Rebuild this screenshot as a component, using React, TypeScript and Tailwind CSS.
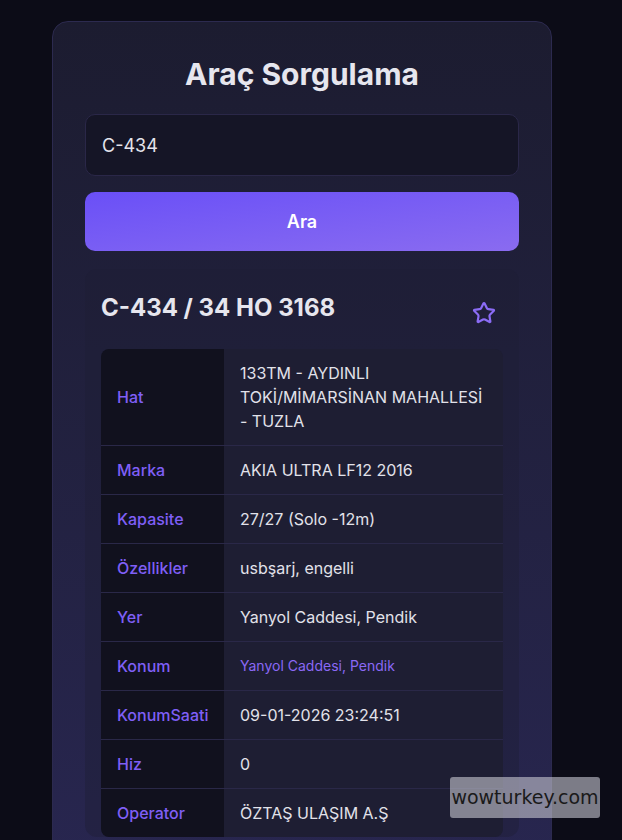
import { Star } from "lucide-react";

type Row = { label: string; value: string; link?: boolean };

const rows: Row[] = [
  { label: "Hat", value: "133TM - AYDINLI TOKİ/MİMARSİNAN MAHALLESİ - TUZLA" },
  { label: "Marka", value: "AKIA ULTRA LF12 2016" },
  { label: "Kapasite", value: "27/27 (Solo -12m)" },
  { label: "Özellikler", value: "usbşarj, engelli" },
  { label: "Yer", value: "Yanyol Caddesi, Pendik" },
  { label: "Konum", value: "Yanyol Caddesi, Pendik", link: true },
  { label: "KonumSaati", value: "09-01-2026 23:24:51" },
  { label: "Hiz", value: "0" },
  { label: "Operator", value: "ÖZTAŞ ULAŞIM A.Ş" },
];

export default function App() {
  return (
    <div className="relative min-h-[840px] h-[840px] overflow-hidden bg-[#0c0c17] font-['Inter',sans-serif] pl-[52px] pt-[21px]">
      <div className="w-[500px] rounded-2xl border border-[#2c2a4f] bg-gradient-to-b from-[#1c1c30] to-[#282650] px-8 pt-8 pb-10">
        <h1 className="text-center text-[30px] leading-[40px] font-bold text-[#e6e6ee]">Araç Sorgulama</h1>
        <div className="mt-[20px] h-[62px] rounded-[10px] border border-[#2a2748] bg-[#151526] flex items-center px-4 text-[18px] text-[#e4e4ec]">
          C-434
        </div>
        <button className="mt-4 w-full h-[59px] rounded-[10px] bg-gradient-to-br from-[#6a4ff7] to-[#8a6bf0] text-white text-[18px] font-semibold">
          Ara
        </button>
        <div className="mt-[18px] rounded-xl bg-[#1e1e34]/40 px-4 pt-[21px]">
          <div className="flex items-center justify-between pr-[7px]">
            <h2 className="text-[24px] leading-[36px] font-bold text-[#e6e6ee]">C-434 / 34 HO 3168</h2>
            <Star size={24} strokeWidth={2.2} className="text-[#8b6cf5] mt-[10px]" />
          </div>
          <div className="mt-[23px] rounded-lg overflow-hidden">
            {rows.map((r, i) => (
              <div
                key={r.label}
                className={`flex ${i < rows.length - 1 ? "border-b border-[#2a2848]" : ""}`}
              >
                <div className="w-[123px] shrink-0 bg-[#11111e] px-4 py-3 flex items-center text-[16px] leading-6 font-medium text-[#7f5ff6]">
                  {r.label}
                </div>
                <div
                  className={`flex-1 bg-[#1e1e33] px-4 py-3 flex items-center ${
                    r.link ? "text-[14px] leading-6 text-[#8a68f5]" : "text-[16px] leading-6 text-[#e2e2ea]"
                  }`}
                >
                  {r.value}
                </div>
              </div>
            ))}
          </div>
        </div>
      </div>
      <div className="absolute left-[450px] top-[777px] w-[150px] h-[41px] rounded-[3px] bg-[#c8c8d2]/60 flex items-center justify-center text-[19px] text-[#1a1a1a] font-['DejaVu_Sans',sans-serif]">
        wowturkey.com
      </div>
    </div>
  );
}
